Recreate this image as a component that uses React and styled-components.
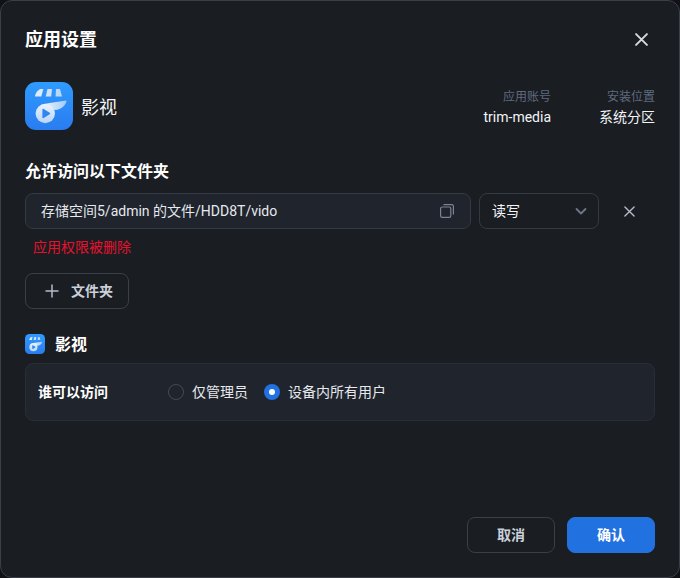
import React from 'react';
import styled, { createGlobalStyle } from 'styled-components';

const fontStack = 'Roboto, "Noto Sans CJK SC", sans-serif';

const GlobalStyle = createGlobalStyle`
  html, body {
    margin: 0;
    padding: 0;
    background: #101216;
  }
  * {
    box-sizing: border-box;
  }
`;

const Dialog = styled.div`
  width: 680px;
  height: 578px;
  display: flex;
  flex-direction: column;
  padding: 0 24px 24px;
  background: #1a1d22;
  border: 1px solid #3a3f49;
  border-radius: 12px;
  color: #fff;
  font-family: ${fontStack};
  font-size: 14px;
`;

const Header = styled.div`
  height: 76px;
  flex: none;
  display: flex;
  align-items: center;
  justify-content: space-between;
`;

const Title = styled.div`
  padding-top: 2px;
  font-size: 18px;
  font-weight: 700;
  line-height: 24px;
`;

const IconButton = styled.button`
  width: ${p => p.$size}px;
  height: ${p => p.$size}px;
  padding: 0;
  display: flex;
  align-items: center;
  justify-content: center;
  background: none;
  border: none;
  color: ${p => p.$color};
`;

const AppRow = styled.div`
  margin-top: 5px;
  height: 48px;
  display: flex;
  align-items: center;
  gap: 8px;
`;

const AppName = styled.div`
  padding-top: 4px;
  font-size: 18px;
  line-height: 24px;
  color: #f2f4f7;
`;

const MetaList = styled.div`
  margin-left: auto;
  display: flex;
  gap: 48px;
`;

const Meta = styled.div`
  padding-top: 1px;
  display: flex;
  flex-direction: column;
  align-items: flex-end;
  gap: 2px;
  line-height: 18px;
`;

const MetaLabel = styled.div`
  font-size: 12px;
  color: #5f6b80;
`;

const MetaValue = styled.div`
  font-size: 14px;
  color: #f2f4f7;
`;

const SectionTitle = styled.div`
  margin-top: 31px;
  font-size: 16px;
  font-weight: 700;
  line-height: 22px;
`;

const FolderRow = styled.div`
  margin-top: 10px;
  display: flex;
  align-items: center;
  line-height: 20px;
`;

const PathField = styled.div`
  width: 446px;
  height: 36px;
  padding: 0 16px 0 15px;
  display: flex;
  align-items: center;
  justify-content: space-between;
  background: #20242c;
  border: 1px solid #343a44;
  border-radius: 8px;
  color: #e6e9ee;
`;

const Select = styled.div`
  margin-left: 8px;
  width: 120px;
  height: 36px;
  padding: 0 11px 0 12px;
  display: flex;
  align-items: center;
  justify-content: space-between;
  border: 1px solid #343a44;
  border-radius: 8px;
  color: #f2f4f7;
`;

const RemoveSlot = styled.div`
  margin-left: 22px;
`;

const ErrorText = styled.div`
  margin: 9px 0 0 8px;
  font-size: 14px;
  line-height: 18px;
  color: #e8112d;
`;

const AddButton = styled.button`
  margin-top: 17px;
  width: 104px;
  height: 36px;
  padding: 0 0 0 19px;
  display: flex;
  align-items: center;
  gap: 12px;
  background: none;
  border: 1px solid #3a3f49;
  border-radius: 8px;
  color: #c9d0da;
  font: 700 14px/20px ${fontStack};
`;

const AppHeading = styled.div`
  margin-top: 25px;
  height: 20px;
  display: flex;
  align-items: center;
  gap: 10px;
  font-size: 16px;
  font-weight: 700;
  line-height: 20px;
`;

const HeadingText = styled.span`
  padding-top: 2px;
`;

const AccessCard = styled.div`
  margin-top: 9px;
  height: 58px;
  padding: 0 12px;
  display: flex;
  align-items: center;
  background: #20242c;
  border: 1px solid #282d36;
  border-radius: 8px;
  line-height: 20px;
`;

const AccessLabel = styled.div`
  width: 130px;
  font-size: 14px;
  font-weight: 700;
`;

const RadioOption = styled.label`
  margin-right: 16px;
  display: flex;
  align-items: center;
  gap: 8px;
  font-size: 14px;
  color: #e6e9ee;
`;

const RadioMark = styled.span`
  width: 16px;
  height: 16px;
  display: flex;
  align-items: center;
  justify-content: center;
  border-radius: 50%;
  border: ${p => (p.$checked ? 'none' : '1px solid #434a56')};
  background: ${p => (p.$checked ? '#2271e0' : 'transparent')};

  &::after {
    content: '';
    display: ${p => (p.$checked ? 'block' : 'none')};
    width: 6px;
    height: 6px;
    border-radius: 50%;
    background: #fff;
  }
`;

const Footer = styled.div`
  margin-top: auto;
  display: flex;
  justify-content: flex-end;
  gap: 12px;
`;

const FooterButton = styled.button`
  width: 88px;
  height: 36px;
  padding: 0;
  border-radius: 8px;
  border: 1px solid ${p => (p.$primary ? '#2271e0' : '#3a3f49')};
  background: ${p => (p.$primary ? '#2271e0' : 'transparent')};
  color: ${p => (p.$primary ? '#fff' : '#c9d0da')};
  font: 700 14px/20px ${fontStack};
`;

const CloseIcon = ({ size, width = 1.6 }) => (
  <svg width={size} height={size} viewBox="0 0 12 12" fill="none" stroke="currentColor" strokeWidth={width} strokeLinecap="round">
    <path d="M1 1l10 10M11 1L1 11" />
  </svg>
);

const AppIcon = ({ size }) => (
  <svg width={size} height={size} viewBox="0 0 48 48">
    <defs>
      <linearGradient id={`bg${size}`} x1="0" y1="0" x2="0" y2="1">
        <stop offset="0" stopColor="#2f9bff" />
        <stop offset="1" stopColor="#2a7cf0" />
      </linearGradient>
      <linearGradient id={`fg${size}`} gradientUnits="userSpaceOnUse" x1="0" y1="20" x2="0" y2="41">
        <stop offset="0" stopColor="#eef5fd" />
        <stop offset="1" stopColor="#b9d6f6" />
      </linearGradient>
      <linearGradient id={`tail${size}`} gradientUnits="userSpaceOnUse" x1="20" y1="0" x2="42" y2="0">
        <stop offset="0" stopColor="#e6f0fb" />
        <stop offset="1" stopColor="#a3cbf7" />
      </linearGradient>
    </defs>
    <rect width="48" height="48" rx="11" fill={`url(#bg${size})`} />
    <path d="M15.500 7h2.800l-2 7.500H10C10.300 11.500 12.500 8 15.500 7z" fill="#dfebfa" />
    <path d="M22.500 7h4.500l-.8 7.500h-5.500z" fill="#cfe2f8" />
    <path d="M31 7h4l2 7.500h-6.500z" fill="#bad7f6" />
    <path d="M15 24.500C18 22 23 20.800 28 20.500L41.500 18.500C41 23 37 27 31 28z" fill={`url(#tail${size})`} />
    <circle cx="20.300" cy="31.500" r="9.700" fill={`url(#fg${size})`} />
    <path d="M17.400 27.600v7.800c0 .7.700 1.100 1.300.7l6-3.900c.6-.4.600-1.200 0-1.500l-6-3.800c-.6-.4-1.300 0-1.300.7z" fill="#2f86ee" />
  </svg>
);

const CopyIcon = () => (
  <svg width="14" height="14" viewBox="0 0 14 14" fill="none" stroke="#7a8494" strokeWidth="1.200">
    <rect x=".6" y="3" width="10.200" height="10.400" rx="1.600" />
    <path d="M3.500 .6h8.200c.9 0 1.700.8 1.700 1.700v8.200" />
  </svg>
);

const ChevronIcon = () => (
  <svg width="12" height="8" viewBox="0 0 12 8" fill="none" stroke="#6d7787" strokeWidth="1.800" strokeLinecap="round" strokeLinejoin="round">
    <path d="M1.500 2l4.500 4.500L10.500 2" />
  </svg>
);

const PlusIcon = () => (
  <svg width="14" height="14" viewBox="0 0 14 14" fill="none" stroke="#b4bcc8" strokeWidth="1.500" strokeLinecap="round">
    <path d="M7 1v12M1 7h12" />
  </svg>
);

const App = () => {
  return (
    <Dialog>
      <GlobalStyle />
      <Header>
        <Title>应用设置</Title>
        <IconButton $size={28} $color="#d5dae2">
          <CloseIcon size={13} width={1.8} />
        </IconButton>
      </Header>
      <AppRow>
        <AppIcon size={48} />
        <AppName>影视</AppName>
        <MetaList>
          <Meta>
            <MetaLabel>应用账号</MetaLabel>
            <MetaValue>trim-media</MetaValue>
          </Meta>
          <Meta>
            <MetaLabel>安装位置</MetaLabel>
            <MetaValue>系统分区</MetaValue>
          </Meta>
        </MetaList>
      </AppRow>
      <SectionTitle>允许访问以下文件夹</SectionTitle>
      <FolderRow>
        <PathField>
          <span>存储空间5/admin 的文件/HDD8T/vido</span>
          <CopyIcon />
        </PathField>
        <Select>
          <span>读写</span>
          <ChevronIcon />
        </Select>
        <RemoveSlot>
          <IconButton $size={16} $color="#b4bcc8">
            <CloseIcon size={11} width={1.5} />
          </IconButton>
        </RemoveSlot>
      </FolderRow>
      <ErrorText>应用权限被删除</ErrorText>
      <AddButton>
        <PlusIcon />
        文件夹
      </AddButton>
      <AppHeading>
        <AppIcon size={20} />
        <HeadingText>影视</HeadingText>
      </AppHeading>
      <AccessCard>
        <AccessLabel>谁可以访问</AccessLabel>
        <RadioOption>
          <RadioMark />
          仅管理员
        </RadioOption>
        <RadioOption>
          <RadioMark $checked />
          设备内所有用户
        </RadioOption>
      </AccessCard>
      <Footer>
        <FooterButton>取消</FooterButton>
        <FooterButton $primary>确认</FooterButton>
      </Footer>
    </Dialog>
  );
};

export default App;
